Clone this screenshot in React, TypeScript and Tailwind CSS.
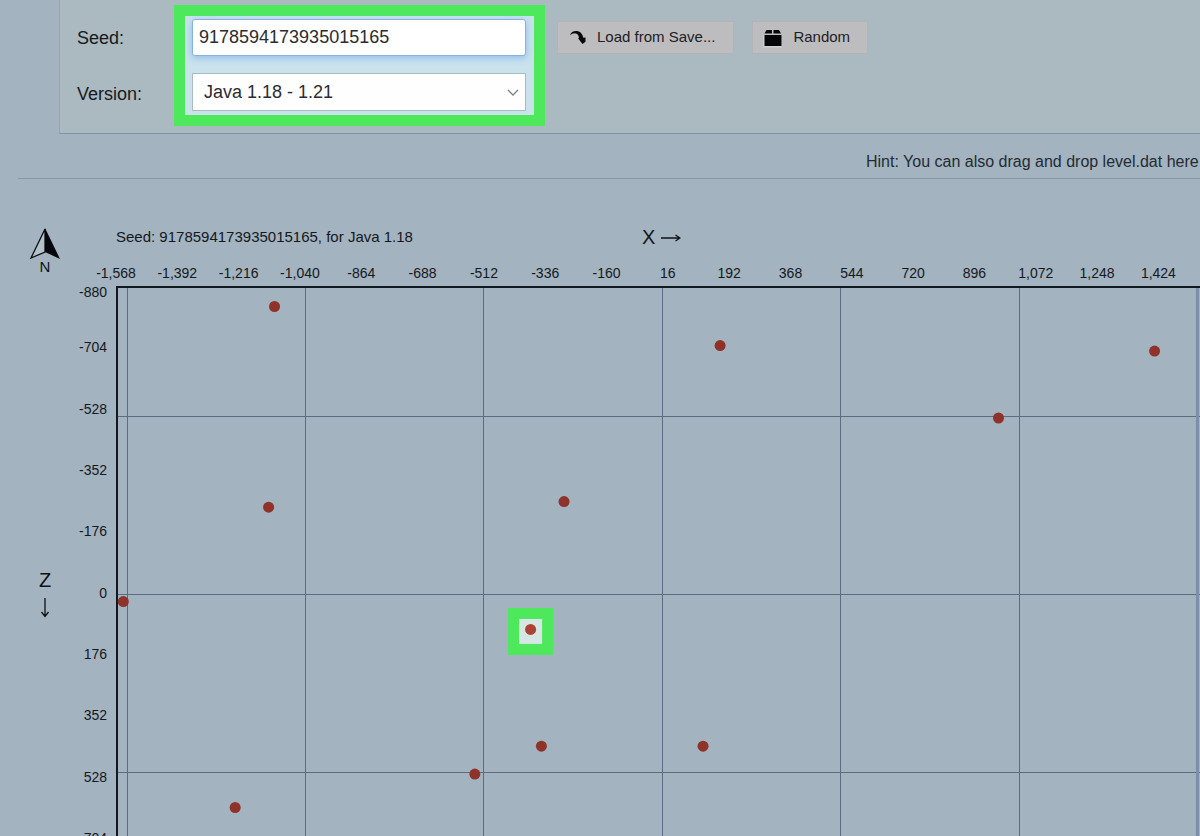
import React, {useState} from 'react';

// pixels per block on the map
const SCALE = 0.3484;
const ORIGIN_X = -1568;
const ORIGIN_Z = -880;
const STEP = 176;

// where the plot starts inside the svg, the rest is room for the tick labels
const PAD_LEFT = 40;
const PAD_TOP = 28;

const toX = (x: number) => PAD_LEFT + (x - ORIGIN_X) * SCALE;
const toY = (z: number) => PAD_TOP + (z - ORIGIN_Z) * SCALE;

const xTicks = Array.from({length: 18}, (_, i) => ORIGIN_X + i * STEP);
const zTicks = Array.from({length: 10}, (_, i) => ORIGIN_Z + i * STEP);
const xLines = [-1536, -1024, -512, 0, 512, 1024];
const zLines = [-512, 0, 512];

const places = [
    {x: -1113, z: -824},
    {x: 166, z: -712},
    {x: 1413, z: -696},
    {x: 965, z: -504},
    {x: -1130, z: -248},
    {x: -282, z: -264},
    {x: -1547, z: 23},
    {x: -378, z: 103, marked: true},
    {x: -347, z: 438},
    {x: 117, z: 438},
    {x: -538, z: 518},
    {x: -1226, z: 614},
];

const LoadIcon = () => (
    <svg width="18" height="16" viewBox="0 0 18 16" aria-hidden="true">
        <path d="M1 5.500C2 .5 8.500 0 11.500 2.500c2 1.700 2.700 4 2.900 6.500H10c0-2.500-.6-4-2-5-1.800-1.200-4.800-1-7 1.500z" fill="#08090b"/>
        <path d="M9 8.200l7.500-.8v4.400l-3 2.200z" fill="#08090b"/>
    </svg>
);

const BoxIcon = () => (
    <svg width="20" height="20" viewBox="0 0 20 20" aria-hidden="true">
        <path d="M0 7.500V19.500h19V7.500z" fill="#cfcfd2"/>
        <path d="M3.500 2H9v3.500H1.500zM10.500 2H16l2 3.500h-7.500zM1.500 7h17v11h-17z" fill="#050608"/>
    </svg>
);

const Compass = () => (
    <svg width="32" height="34" viewBox="0 0 32 34" aria-hidden="true">
        <path d="M16 2L2 31l14-6z" fill="#b3c1cb" stroke="#0b0e12" strokeWidth="1.300"/>
        <path d="M16 1v24l15 7z" fill="#06080b"/>
    </svg>
);

const SeedForm = () => {
    const [seed, setSeed] = useState('9178594173935015165');
    const [version, setVersion] = useState('Java 1.18 - 1.21');

    const randomize = () => {
        setSeed(String(Math.floor(Math.random() * Number.MAX_SAFE_INTEGER)));
    };

    return (
        <form className="ml-[59px] flex items-start border-b border-l border-b-[#8093a3] border-l-[#96a5b0] bg-[#abb9c0] pt-[5px] pb-[7px] pl-[17px]">
            <div className="flex w-[97px] shrink-0 flex-col gap-[18px] pt-[14px] text-lg text-[#16191d]">
                <label htmlFor="seed" className="h-[38px] leading-[38px]">Seed:</label>
                <label htmlFor="version" className="h-[38px] leading-[38px]">Version:</label>
            </div>
            <div className="flex w-[371px] shrink-0 flex-col gap-[17px] border-[11px] border-[#4ee85d] bg-[#c9e2ec] pt-[3px] pr-2 pb-1 pl-[7px]">
                <input
                    id="seed"
                    value={seed}
                    onChange={(e) => setSeed(e.target.value)}
                    className="h-[37px] w-full rounded-[3px] border border-[#86b3dc] bg-white px-[6px] text-lg text-[#2b2c30] shadow-[0_2px_7px_#8fbcf0] outline-none"
                />
                <div className="relative">
                    <select
                        id="version"
                        value={version}
                        onChange={(e) => setVersion(e.target.value)}
                        className="block h-[38px] w-full appearance-none border border-[#a9bcc4] bg-[#fefefe] px-[11px] text-lg text-[#2b2c30] outline-none"
                    >
                        <option>Java 1.18 - 1.21</option>
                        <option>Java 1.17</option>
                        <option>Java 1.16</option>
                    </select>
                    <svg className="pointer-events-none absolute top-4 right-[7px]" width="12" height="8" viewBox="0 0 12 8" aria-hidden="true">
                        <path d="M1 1l5 5 5-5" fill="none" stroke="#7d8284" strokeWidth="1.300"/>
                    </svg>
                </div>
            </div>
            <div className="ml-3 flex shrink-0 gap-[18px] pt-4 text-[15px] text-[#1e2023]">
                <button type="button" className="flex h-[33px] items-center gap-[10px] border border-[#b2b5b8] bg-[#bdbdc0] pr-[18px] pl-[11px]">
                    <LoadIcon/>
                    <span>Load from Save...</span>
                </button>
                <button type="button" onClick={randomize} className="flex h-[33px] items-center gap-[10px] border border-[#b2b5b8] bg-[#bdbdc0] pr-[17px] pl-[10px]">
                    <BoxIcon/>
                    <span>Random</span>
                </button>
            </div>
        </form>
    );
};

const SeedMap = () => (
    <svg className="min-h-[576px] w-full flex-1" role="img" aria-label="Seed map">
        <g stroke="#5c6c83" strokeWidth="1">
            {xLines.map((x) => (
                <line key={x} x1={Math.floor(toX(x)) + 0.5} x2={Math.floor(toX(x)) + 0.5} y1={PAD_TOP} y2="100%"/>
            ))}
            {zLines.map((z) => (
                <line key={z} x1={PAD_LEFT} x2="100%" y1={Math.ceil(toY(z)) + 0.5} y2={Math.ceil(toY(z)) + 0.5}/>
            ))}
        </g>
        <line x1={toX(1536)} x2={toX(1536)} y1={PAD_TOP} y2="100%" stroke="#7e8eaa" strokeWidth="3"/>
        <g stroke="#12181f" strokeWidth="2">
            <line x1={PAD_LEFT} x2="100%" y1={PAD_TOP} y2={PAD_TOP}/>
            <line x1={PAD_LEFT + 1} x2={PAD_LEFT + 1} y1={PAD_TOP - 1} y2="100%"/>
        </g>
        <g fontSize="14" fill="#14181d">
            {xTicks.map((x) => (
                <text key={x} x={toX(x)} y={PAD_TOP - 9} textAnchor="middle">{x.toLocaleString('en-US')}</text>
            ))}
            {zTicks.map((z) => (
                <text key={z} x={PAD_LEFT - 9} y={Math.max(toY(z) + 4, PAD_TOP + 10)} textAnchor="end">{z}</text>
            ))}
        </g>
        {places.map((place) => (
            <g key={`${place.x},${place.z}`}>
                {place.marked && (
                    <rect x={toX(place.x) - 17} y={toY(place.z) - 16} width="34" height="36" fill="#d5e6e4" stroke="#4ee85d" strokeWidth="11"/>
                )}
                <circle cx={toX(place.x)} cy={toY(place.z)} r="5.500" fill={place.marked ? '#ab4236' : '#8f3229'}/>
            </g>
        ))}
    </svg>
);

const App = () => {
    return (
        <div className="flex min-h-screen flex-col overflow-hidden bg-[#a3b3bf] font-['Liberation_Sans',Arial,sans-serif]">
            <SeedForm/>
            <p className="ml-[18px] border-b border-[#8596a6] pt-4 pb-1 pl-[848px] leading-6 whitespace-nowrap text-[#242b33]">
                Hint: You can also drag and drop level.dat here
            </p>
            <main className="flex flex-1 pt-12">
                <div className="flex w-[76px] shrink-0 flex-col items-center pl-[14px] text-[#0e1216]">
                    <Compass/>
                    <span className="text-[15px] leading-3">N</span>
                    <span className="mt-[295px] text-xl leading-6">Z</span>
                    <svg className="mt-[6px]" width="10" height="20" viewBox="0 0 10 20" aria-hidden="true">
                        <path d="M5 0v18M1.500 14L5 18.500 8.500 14" fill="none" stroke="#0e1216" strokeWidth="1.300"/>
                    </svg>
                </div>
                <div className="flex min-w-0 flex-1 flex-col">
                    <div className="flex h-8 items-start pl-10 text-[#14181d]">
                        <h1 className="w-[526px] shrink-0 text-[15px] leading-5">Seed: 9178594173935015165, for Java 1.18</h1>
                        <div className="flex items-center gap-[6px]">
                            <span className="text-xl leading-5">X</span>
                            <svg width="20" height="10" viewBox="0 0 20 10" aria-hidden="true">
                                <path d="M0 6h18M14.500 3L19 6l-4.500 3" fill="none" stroke="#0e1216" strokeWidth="1.300"/>
                            </svg>
                        </div>
                    </div>
                    <SeedMap/>
                </div>
            </main>
        </div>
    );
};

export default App;
